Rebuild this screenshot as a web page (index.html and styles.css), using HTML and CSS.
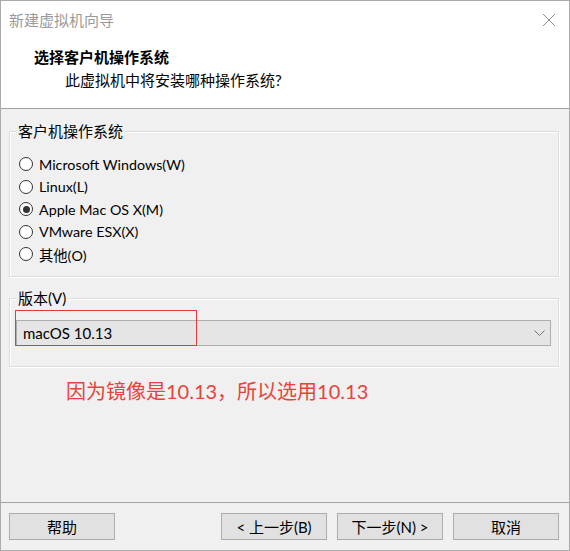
FILE: index.html
```html
<!DOCTYPE html>
<html lang="zh-CN">
<head>
<meta charset="utf-8">
<title>新建虚拟机向导</title>
<link rel="stylesheet" href="styles.css">
</head>
<body>
<div class="window">
  <div class="top">
    <div class="titlebar">
      <span class="title">新建虚拟机向导</span>
      <svg class="close" width="14" height="14" viewBox="0 0 14 14"><path d="M1 1L13 13M13 1L1 13" stroke="#8a8a8a" stroke-width="1" fill="none"/></svg>
    </div>
    <div class="header">
      <div class="h-title">选择客户机操作系统</div>
      <div class="h-sub">此虚拟机中将安装哪种操作系统?</div>
    </div>
  </div>
  <div class="body">
    <div class="group os">
      <div class="legend">客户机操作系统</div>
      <div class="radios">
        <div class="radio"><span class="dot"></span><span>Microsoft Windows(W)</span></div>
        <div class="radio"><span class="dot"></span><span>Linux(L)</span></div>
        <div class="radio"><span class="dot checked"></span><span>Apple Mac OS X(M)</span></div>
        <div class="radio"><span class="dot"></span><span>VMware ESX(X)</span></div>
        <div class="radio"><span class="dot"></span><span>其他(O)</span></div>
      </div>
    </div>
    <div class="group ver">
      <div class="legend">版本(V)</div>
      <div class="select">
        <span>macOS 10.13</span>
        <svg class="chev" width="11" height="6" viewBox="0 0 11 6"><path d="M0.5 0.5L5.5 5.5L10.5 0.5" stroke="#707070" stroke-width="1" fill="none"/></svg>
      </div>
      <div class="redbox"></div>
    </div>
    <div class="note">因为镜像是10.13，所以选用10.13</div>
  </div>
  <div class="footer">
    <button class="btn">帮助</button>
    <div class="spacer"></div>
    <button class="btn">&lt; 上一步(B)</button>
    <button class="btn">下一步(N) &gt;</button>
    <button class="btn">取消</button>
  </div>
</div>
</body>
</html>
```

FILE: styles.css
```css
html, body {
  margin: 0;
  padding: 0;
}
body {
  width: 570px;
  height: 551px;
  font-family: "Lato", "Noto Sans CJK SC", sans-serif;
  font-size: 15px;
  color: #000;
  overflow: hidden;
}
.window {
  box-sizing: border-box;
  width: 570px;
  height: 551px;
  border: 1px solid #ababab;
  background: #f0f0f0;
  display: flex;
  flex-direction: column;
}
.top {
  height: 107px;
  background: #fff;
  border-bottom: 1px solid #a0a0a0;
}
.titlebar {
  height: 37px;
  display: flex;
  align-items: center;
  justify-content: space-between;
  padding: 0 13px 0 8px;
}
.title {
  color: #9a9a9a;
  line-height: 20px;
}
.close {
  display: block;
}
.header {
  padding-left: 33px;
}
.h-title {
  margin-top: 9px;
  line-height: 20px;
  font-weight: bold;
}
.h-sub {
  margin-top: 3px;
  padding-left: 31px;
  line-height: 20px;
}
.body {
  flex: 1;
  padding: 0 10px 0 8px;
  display: flex;
  flex-direction: column;
}
.group {
  position: relative;
  border: 1px solid #dcdcdc;
  box-shadow: inset 1px 1px 0 #fff, 1px 1px 0 #fff;
  display: flex;
  flex-direction: column;
}
.legend {
  align-self: flex-start;
  margin: -11px 0 0 6px;
  padding: 0 2px;
  line-height: 20px;
  background: #f0f0f0;
}
.os {
  margin-top: 22px;
  padding-bottom: 10px;
}
.radios {
  margin-top: 12px;
  padding-left: 9px;
  font-size: 14.3px;
}
.radio {
  height: 22.5px;
  display: flex;
  align-items: center;
  gap: 6px;
}
.dot {
  box-sizing: border-box;
  width: 14px;
  height: 14px;
  border: 1px solid #333;
  border-radius: 50%;
  background: #fff;
  display: flex;
  align-items: center;
  justify-content: center;
}
.dot.checked::after {
  content: "";
  width: 7px;
  height: 7px;
  border-radius: 50%;
  background: #333;
}
.ver {
  margin-top: 21px;
  padding-bottom: 20px;
}
.select {
  box-sizing: border-box;
  margin: 12px 7px 0 6px;
  height: 26px;
  border: 1px solid #adadad;
  background: #e5e5e5;
  display: flex;
  align-items: center;
  justify-content: space-between;
  padding: 0 5px 0 6px;
}
.chev {
  display: block;
}
.redbox {
  position: absolute;
  left: 5px;
  top: 11px;
  width: 182px;
  height: 36px;
  box-sizing: border-box;
  border: 1px solid #e23b3b;
}
.note {
  margin-top: 10px;
  padding-left: 57px;
  line-height: 28px;
  font-size: 20px;
  color: #e8433b;
}
.footer {
  height: 37px;
  border-top: 1px solid #a0a0a0;
  padding: 10px 10px 0 8px;
  display: flex;
  gap: 10px;
}
.spacer {
  flex: 1;
}
.btn {
  box-sizing: border-box;
  width: 106px;
  height: 27px;
  margin: 0;
  padding: 0;
  border: 1px solid #adadad;
  background: #e1e1e1;
  font-family: "Lato", "Noto Sans CJK SC", sans-serif;
  font-size: 15px;
  color: #000;
}
```
